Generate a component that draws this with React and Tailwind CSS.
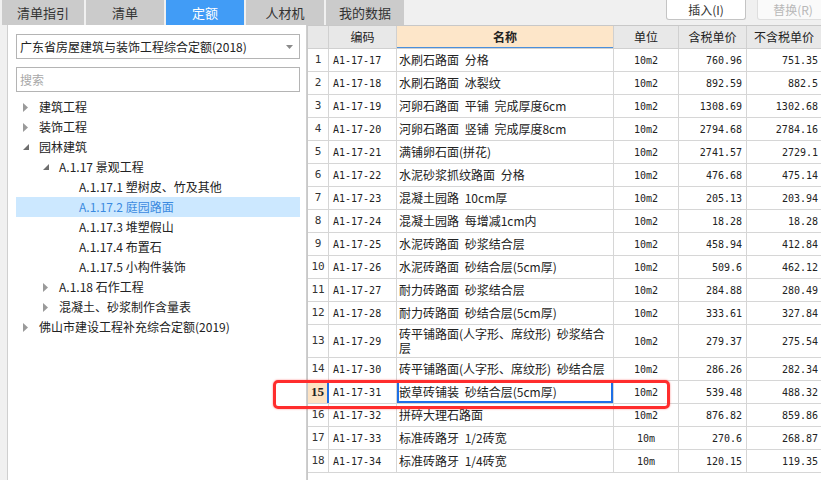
import React from "react";

const tabs = ["清单指引", "清单", "定额", "人材机", "我的数据"];

const tree = [
  { level: 0, arrow: "closed", label: "建筑工程" },
  { level: 0, arrow: "closed", label: "装饰工程" },
  { level: 0, arrow: "open", label: "园林建筑" },
  { level: 1, arrow: "open", label: "A.1.17 景观工程" },
  { level: 2, label: "A.1.17.1 塑树皮、竹及其他" },
  { level: 2, label: "A.1.17.2 庭园路面", selected: true },
  { level: 2, label: "A.1.17.3 堆塑假山" },
  { level: 2, label: "A.1.17.4 布置石" },
  { level: 2, label: "A.1.17.5 小构件装饰" },
  { level: 1, arrow: "closed", label: "A.1.18 石作工程" },
  { level: 1, arrow: "closed", label: "混凝土、砂浆制作含量表" },
  { level: 0, arrow: "closed", label: "佛山市建设工程补充综合定额(2019)" },
];

const rows = [
  ["A1-17-17", "水刷石路面 分格", "10m2", "760.96", "751.35"],
  ["A1-17-18", "水刷石路面 冰裂纹", "10m2", "892.59", "882.5"],
  ["A1-17-19", "河卵石路面 平铺 完成厚度6cm", "10m2", "1308.69", "1302.68"],
  ["A1-17-20", "河卵石路面 竖铺 完成厚度8cm", "10m2", "2794.68", "2784.16"],
  ["A1-17-21", "满铺卵石面(拼花)", "10m2", "2741.57", "2729.1"],
  ["A1-17-22", "水泥砂浆抓纹路面 分格", "10m2", "476.68", "475.14"],
  ["A1-17-23", "混凝土园路 10cm厚", "10m2", "205.13", "203.94"],
  ["A1-17-24", "混凝土园路 每增减1cm内", "10m2", "18.28", "18.28"],
  ["A1-17-25", "水泥砖路面 砂浆结合层", "10m2", "458.94", "412.84"],
  ["A1-17-26", "水泥砖路面 砂结合层(5cm厚)", "10m2", "509.6", "462.12"],
  ["A1-17-27", "耐力砖路面 砂浆结合层", "10m2", "284.88", "280.49"],
  ["A1-17-28", "耐力砖路面 砂结合层(5cm厚)", "10m2", "333.61", "327.84"],
  ["A1-17-29", ["砖平铺路面(人字形、席纹形) 砂浆结合", "层"], "10m2", "279.37", "275.54"],
  ["A1-17-30", "砖平铺路面(人字形、席纹形) 砂结合层", "10m2", "286.26", "282.34"],
  ["A1-17-31", "嵌草砖铺装 砂结合层(5cm厚)", "10m2", "539.48", "488.32"],
  ["A1-17-32", "拼碎大理石路面", "10m2", "876.82", "859.86"],
  ["A1-17-33", "标准砖路牙 1/2砖宽", "10m", "270.6", "268.87"],
  ["A1-17-34", "标准砖路牙 1/4砖宽", "10m", "120.15", "119.35"],
];

const Arrow = ({ type }) => {
  if (type === "open")
    return (
      <svg width="7" height="7" viewBox="0 0 7 7" className="ml-[7px]">
        <polygon points="6,0 6,6 0,6" fill="#6e6e6e" />
      </svg>
    );
  if (type === "closed")
    return (
      <svg width="5" height="9" viewBox="0 0 5 9" className="ml-[7px]">
        <polygon points="0,0 5,4.5 0,9" fill="#9a9a9a" />
      </svg>
    );
  return null;
};

const mono = "font-['DejaVu_Sans_Mono',monospace] text-[10px]";

export default function App() {
  return (
    <div className="relative w-[821px] h-[480px] overflow-hidden bg-[#f0f0f0] font-['Noto_Sans_CJK_SC',sans-serif] text-[12px] text-[#222]">
      {/* top bar: tabs + buttons */}
      <div className="flex h-[25px]">
        <div className="flex gap-[2px] pl-[2px]">
          {tabs.map((t, i) => (
            <div
              key={t}
              className={
                "flex items-center justify-center h-[25px] " +
                (i === 0 ? "w-[82px] " : "w-[78px] ") +
                (i === 2 ? "bg-[#419cf6] text-white" : "bg-[#cbcbcb] text-[#333]")
              }
            >
              <span className="text-[13px]">{t}</span>
            </div>
          ))}
        </div>
        <div className="flex ml-[262px] gap-[11px]">
          <div className="w-[80px] h-[20px] bg-white border border-t-0 border-[#c4c4c4] rounded-b-[3px] flex items-center justify-center text-[#333]">
            插入(I)
          </div>
          <div className="w-[72px] h-[20px] bg-[#fafafa] border border-t-0 border-[#dedede] rounded-b-[3px] flex items-center justify-center text-[#b8b8b8]">
            替换(R)
          </div>
        </div>
      </div>

      <div className="flex h-[455px]">
        {/* left panel */}
        <div className="ml-[7px] w-[300px] bg-white border-x border-[#cfcfcf] pt-[9px] pl-[8px]">
          <div className="w-[284px] h-[25px] border border-[#b4b4b4] flex items-center pl-[3px] pr-[6px]">
            <span className="flex-1">广东省房屋建筑与装饰工程综合定额(2018)</span>
            <svg width="7" height="4" viewBox="0 0 7 4">
              <polygon points="0,0 7,0 3.5,4" fill="#8a8a8a" />
            </svg>
          </div>
          <div className="mt-[8px] w-[284px] h-[25px] border border-[#b4b4b4] flex items-center pl-[3px] text-[#a8a8a8]">
            搜索
          </div>
          <div className="mt-[5px] w-[284px]">
            {tree.map((n) => (
              <div
                key={n.label}
                className={
                  "flex items-center h-[20px] " +
                  (n.selected ? "bg-[#cce8ff] text-[#3b8ae0]" : "text-[#222]")
                }
              >
                <div style={{ width: n.level * 20 }} className="shrink-0" />
                <div className="w-[23px] shrink-0 flex items-center">
                  <Arrow type={n.arrow} />
                </div>
                <span className="whitespace-nowrap">{n.label}</span>
              </div>
            ))}
          </div>
        </div>

        {/* table */}
        <div className="flex-1 bg-white border-l border-t border-[#c8c8c8]">
          <div className="flex h-[23px] border-b border-[#d0d0d0] text-[#222]">
            <div className="w-[21px] bg-[#e8e8e8] border-r border-[#d0d0d0]" />
            <div className="w-[68px] bg-[#e8e8e8] border-r border-[#d0d0d0] flex items-center justify-center">编码</div>
            <div className="w-[217px] bg-[#fde6c9] border-r border-[#d0d0d0] shadow-[inset_0_-1px_0_#4a8fdc] flex items-center justify-center font-bold">名称</div>
            <div className="w-[65px] bg-[#e8e8e8] border-r border-[#d0d0d0] flex items-center justify-center">单位</div>
            <div className="w-[68px] bg-[#e8e8e8] border-r border-[#d0d0d0] flex items-center justify-center">含税单价</div>
            <div className="flex-1 bg-[#e8e8e8] flex items-center justify-center">不含税单价</div>
          </div>
          {rows.map((r, i) => {
            const sel = i === 14;
            const tall = Array.isArray(r[1]);
            return (
              <div
                key={r[0]}
                className={"flex border-b border-[#d6d6d6] " + (tall ? "h-[33px]" : "h-[23px]")}
              >
                <div
                  className={
                    "w-[21px] flex items-center justify-center " +
                    (sel
                      ? "bg-[#fde3c4] border-r-2 border-[#1e6fe6] font-bold text-[13px] font-['Liberation_Serif',serif]"
                      : "border-r border-[#d6d6d6] " + mono + " text-[11px] text-[#333]")
                  }
                >
                  {i + 1}
                </div>
                <div className={"w-[68px] border-r border-[#d6d6d6] flex items-center pl-[4px] " + mono}>
                  {r[0]}
                </div>
                <div
                  className={
                    "relative w-[217px] border-r border-[#d6d6d6] flex items-center pl-[2px] whitespace-nowrap [word-spacing:3px] " +
                    (sel ? "shadow-[inset_0_0_0_2px_#1e6fe6]" : "")
                  }
                >
                  {tall ? (
                    <div className="leading-[14px]">
                      {r[1][0]}
                      <br />
                      {r[1][1]}
                    </div>
                  ) : (
                    r[1]
                  )}
                </div>
                <div className={"w-[65px] border-r border-[#d6d6d6] flex items-center justify-center " + mono}>
                  {r[2]}
                </div>
                <div className={"w-[68px] border-r border-[#d6d6d6] flex items-center justify-end pr-[4px] " + mono}>
                  {r[3]}
                </div>
                <div className={"flex-1 flex items-center justify-end pr-[3px] " + mono}>{r[4]}</div>
              </div>
            );
          })}
        </div>
      </div>

      {/* red annotation */}
      <div className="absolute left-[273px] top-[380px] w-[397px] h-[29px] border-[3px] border-[#ff2d2d] rounded-[5px] shadow-[0_0_2px_rgba(255,40,40,0.6)]" />
    </div>
  );
}
